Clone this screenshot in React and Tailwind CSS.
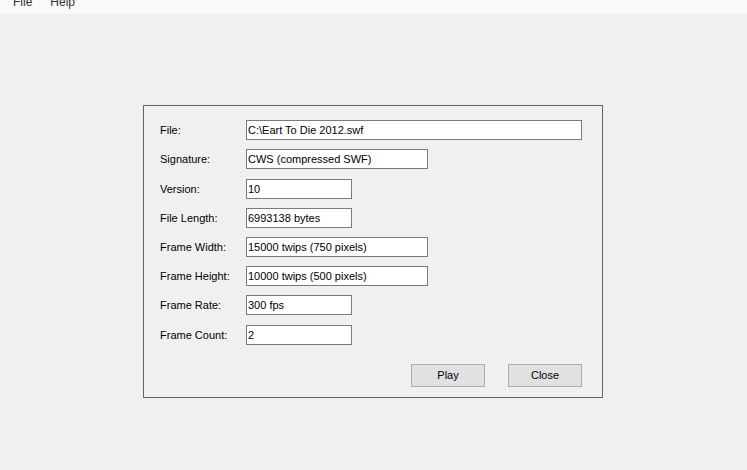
import React from "react";

const rows = [
  { label: "File:", value: "C:\\Eart To Die 2012.swf", w: "w-[336px]", mt: "mt-0" },
  { label: "Signature:", value: "CWS (compressed SWF)", w: "w-[182px]", mt: "mt-[9px]" },
  { label: "Version:", value: "10", w: "w-[106px]", mt: "mt-[10px]" },
  { label: "File Length:", value: "6993138 bytes", w: "w-[106px]", mt: "mt-[9px]" },
  { label: "Frame Width:", value: "15000 twips (750 pixels)", w: "w-[182px]", mt: "mt-[9px]" },
  { label: "Frame Height:", value: "10000 twips (500 pixels)", w: "w-[182px]", mt: "mt-[9px]" },
  { label: "Frame Rate:", value: "300 fps", w: "w-[106px]", mt: "mt-[9px]" },
  { label: "Frame Count:", value: "2", w: "w-[106px]", mt: "mt-[10px]" },
];

export default function App() {
  return (
    <div
      className="w-[747px] h-[470px] bg-[#f0f0f0] overflow-hidden text-black"
      style={{ fontFamily: '"Liberation Sans", Arial, sans-serif' }}
    >
      <div className="h-[14px] bg-[#f9f9f9] overflow-hidden">
        <div className="flex -mt-[5px] pl-[13px] gap-[18px] text-[12px] leading-[14px] text-[#333]">
          <span>File</span>
          <span>Help</span>
        </div>
      </div>
      <div className="ml-[143px] mt-[91px] w-[460px] h-[293px] border border-[#646464] pl-[16px] pt-[14px] pr-[20px] flex flex-col">
        {rows.map((r) => (
          <div key={r.label} className={`flex items-center h-[20px] ${r.mt}`}>
            <div className="w-[86px] text-[11px] leading-[14px]">{r.label}</div>
            <div
              className={`${r.w} h-[20px] border border-[#7a7a7a] bg-white text-[11px] leading-[18px] pl-[1px] whitespace-nowrap overflow-hidden`}
            >
              {r.value}
            </div>
          </div>
        ))}
        <div className="flex justify-end gap-[23px] mt-[19px]">
          <button className="w-[74px] h-[23px] bg-[#e1e1e1] border border-[#adadad] text-[11px] leading-[21px] text-black">
            Play
          </button>
          <button className="w-[74px] h-[23px] bg-[#e1e1e1] border border-[#adadad] text-[11px] leading-[21px] text-black">
            Close
          </button>
        </div>
      </div>
    </div>
  );
}
